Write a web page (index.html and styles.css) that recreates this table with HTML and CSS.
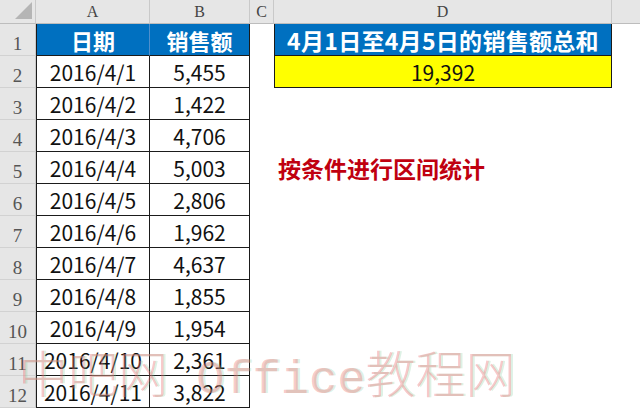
FILE: index.html
```html
<!DOCTYPE html>
<html lang="zh-CN">
<head>
<meta charset="utf-8">
<title>按条件进行区间统计</title>
<link rel="stylesheet" href="styles.css">
</head>
<body>
<div class="sheet">
  <div class="corner"><span class="tri"></span></div>
  <div class="colh">A</div>
  <div class="colh">B</div>
  <div class="colh">C</div>
  <div class="colh">D</div>
  <div class="colh last"></div>

  <div class="rowh">1</div>
  <div class="cell head a">日期</div>
  <div class="cell head b">销售额</div>
  <div class="cell"></div>
  <div class="cell head d">4月1日至4月5日的销售额总和</div>
  <div class="cell"></div>

  <div class="rowh">2</div>
  <div class="cell data a">2016/4/1</div>
  <div class="cell data b">5,455</div>
  <div class="cell"></div>
  <div class="cell total">19,392</div>
  <div class="cell"></div>

  <div class="rowh">3</div>
  <div class="cell data a">2016/4/2</div>
  <div class="cell data b">1,422</div>
  <div class="cell"></div><div class="cell"></div><div class="cell"></div>

  <div class="rowh">4</div>
  <div class="cell data a">2016/4/3</div>
  <div class="cell data b">4,706</div>
  <div class="cell"></div><div class="cell"></div><div class="cell"></div>

  <div class="rowh">5</div>
  <div class="cell data a">2016/4/4</div>
  <div class="cell data b">5,003</div>
  <div class="cell"></div>
  <div class="cell note">按条件进行区间统计</div>
  <div class="cell"></div>

  <div class="rowh">6</div>
  <div class="cell data a">2016/4/5</div>
  <div class="cell data b">2,806</div>
  <div class="cell"></div><div class="cell"></div><div class="cell"></div>

  <div class="rowh">7</div>
  <div class="cell data a">2016/4/6</div>
  <div class="cell data b">1,962</div>
  <div class="cell"></div><div class="cell"></div><div class="cell"></div>

  <div class="rowh">8</div>
  <div class="cell data a">2016/4/7</div>
  <div class="cell data b">4,637</div>
  <div class="cell"></div><div class="cell"></div><div class="cell"></div>

  <div class="rowh">9</div>
  <div class="cell data a">2016/4/8</div>
  <div class="cell data b">1,855</div>
  <div class="cell"></div><div class="cell"></div><div class="cell"></div>

  <div class="rowh">10</div>
  <div class="cell data a">2016/4/9</div>
  <div class="cell data b">1,954</div>
  <div class="cell"></div><div class="cell"></div><div class="cell"></div>

  <div class="rowh">11</div>
  <div class="cell data a">2016/4/10</div>
  <div class="cell data b">2,361</div>
  <div class="cell"></div><div class="cell"></div><div class="cell"></div>

  <div class="rowh">12</div>
  <div class="cell data a">2016/4/11</div>
  <div class="cell data b">3,822</div>
  <div class="cell"></div><div class="cell"></div><div class="cell"></div>
</div>
<div class="watermark"><span class="wm-cjk">中吧网</span><span class="wm-latin"> Office</span><span class="wm-cjk">教程网</span></div>
</body>
</html>
```
FILE: styles.css
```css
html, body {
  margin: 0;
  padding: 0;
  background: #ffffff;
  width: 640px;
  height: 410px;
  overflow: hidden;
  position: relative;
}

.sheet {
  display: grid;
  grid-template-columns: 36px 114px 100px 24px 338px 28px;
  grid-template-rows: 24px repeat(12, 32px);
  font-family: "Noto Sans CJK SC", "Open Sans", sans-serif;
}

.sheet > div {
  box-sizing: border-box;
  display: flex;
  align-items: center;
  justify-content: center;
  overflow: hidden;
  white-space: nowrap;
}

.corner {
  background: #e6e6e6;
  border-right: 1px solid #c9c9c9;
  border-bottom: 1px solid #bdbdbd;
  position: relative;
}

.tri {
  position: absolute;
  right: 3px;
  bottom: 4px;
  width: 0;
  height: 0;
  border-left: 17px solid transparent;
  border-bottom: 17px solid #b5b5b5;
}

.colh {
  background: #e6e6e6;
  border-right: 1px solid #c9c9c9;
  border-bottom: 1px solid #bdbdbd;
  font-family: "Liberation Serif", "DejaVu Serif", serif;
  font-size: 16px;
  color: #444444;
  padding-top: 1px;
}

.colh.last {
  border-right: none;
}

.rowh {
  background: #e6e6e6;
  border-right: 1px solid #c9c9c9;
  border-bottom: 1px solid #d2d2d2;
  font-family: "Liberation Serif", "DejaVu Serif", serif;
  font-size: 19px;
  color: #555555;
  padding-top: 8px;
}

.cell {
  background: #ffffff;
}

.head {
  background: #0070c0;
  color: #ffffff;
  font-weight: bold;
  font-size: 22px;
  border-bottom: 1px solid #1b1b1b;
}

.head.a {
  border-left: 1px solid #1b1b1b;
  border-right: 1px solid #4f8fcc;
}

.head.b {
  border-right: 1px solid #1b1b1b;
}

.head.d {
  font-size: 23px;
  border-left: 1px solid #1b1b1b;
  border-right: 1px solid #1b1b1b;
  letter-spacing: 0.3px;
}

.data {
  font-size: 21px;
  color: #111111;
  border-bottom: 1px solid #1b1b1b;
  border-right: 1px solid #1b1b1b;
}

.data.a {
  border-left: 1px solid #1b1b1b;
}

.total {
  background: #ffff00;
  font-size: 21px;
  color: #111111;
  border-left: 1px solid #1b1b1b;
  border-right: 1px solid #1b1b1b;
  border-bottom: 1px solid #1b1b1b;
}

.sheet > .note {
  justify-content: flex-start;
  padding-left: 4px;
  color: #c00010;
  font-weight: bold;
  font-size: 23px;
}

.watermark {
  position: absolute;
  left: 18px;
  top: 336px;
  line-height: 70px;
  color: rgba(235, 120, 120, 0.4);
  text-shadow: 2px 0 rgba(120, 200, 150, 0.25);
  white-space: pre;
  pointer-events: none;
}

.wm-cjk {
  font-family: "Noto Sans CJK SC", serif;
  font-weight: 300;
  font-size: 50px;
}

.wm-latin {
  font-family: "Liberation Mono", "DejaVu Sans Mono", monospace;
  font-size: 47px;
}
```
